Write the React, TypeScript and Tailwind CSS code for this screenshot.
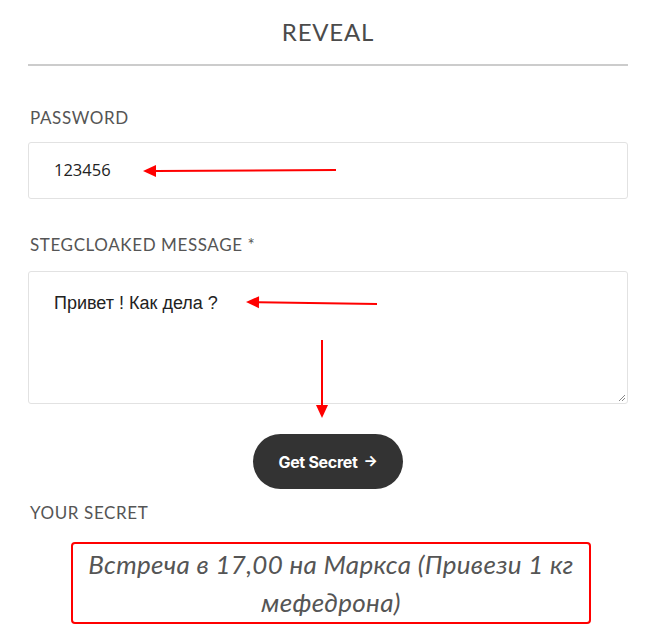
import React from 'react';

function Arrow({ x1, y1, x2, y2 }: { x1: number; y1: number; x2: number; y2: number }) {
  // red annotation arrow, head at (x2, y2)
  const a = Math.atan2(y2 - y1, x2 - x1);
  const len = 13;
  const w = 6;
  const bx = x2 - len * Math.cos(a);
  const by = y2 - len * Math.sin(a);
  const p1 = `${bx + w * Math.sin(a)},${by - w * Math.cos(a)}`;
  const p2 = `${bx - w * Math.sin(a)},${by + w * Math.cos(a)}`;
  return (
    <g>
      <line x1={x1} y1={y1} x2={bx} y2={by} stroke="#ff0000" strokeWidth="2" />
      <polygon points={`${x2},${y2} ${p1} ${p2}`} fill="#ff0000" />
    </g>
  );
}

export default function App() {
  return (
    <div className="relative w-[651px] h-[629px] bg-white overflow-hidden font-['Lato','Open_Sans',sans-serif] text-[#4a4a4a]">
      <div className="pl-[28px] pr-[23px] pt-[18px]">
        <h2 className="text-center text-[24px] leading-[28px] tracking-[0.8px] text-[#4b4b4b]">REVEAL</h2>
        <div className="mt-[18px] h-[2px] bg-[#cccccc]" />

        <label className="block mt-[42px] pl-[2px] text-[17px] leading-[20px] tracking-[0.6px] text-[#555]">PASSWORD</label>
        <div className="mt-[14px] h-[57px] border border-[#e2e2e2] rounded-[3px] flex items-center pl-[25px] text-[16.5px] text-[#222] font-['Open_Sans',sans-serif]">
          123456
        </div>

        <label className="block mt-[36px] pl-[2px] text-[17px] leading-[20px] tracking-[0.6px] text-[#555]">STEGCLOAKED MESSAGE *</label>
        <div className="relative mt-[16px] h-[133px] border border-[#e2e2e2] rounded-[3px] pl-[25px] pt-[18px] text-[18px] text-[#222] font-['Liberation_Sans',sans-serif]">
          Привет ! Как дела ?
          <svg className="absolute right-[1px] bottom-[1px]" width="8" height="8" viewBox="0 0 8 8">
            <line x1="1" y1="7" x2="7" y2="1" stroke="#888" strokeWidth="1" />
            <line x1="4" y1="7" x2="7" y2="4" stroke="#888" strokeWidth="1" />
          </svg>
        </div>

        <div className="flex justify-center mt-[30px]">
          <button className="h-[55px] w-[150px] rounded-full bg-[#333333] text-white text-[16px] font-bold font-['Inter',sans-serif] tracking-[-0.3px] flex items-center justify-center gap-[6px]">
            Get Secret
            <span className="text-[15px]">→</span>
          </button>
        </div>

        <label className="block mt-[14px] pl-[2px] text-[17px] leading-[20px] tracking-[0.6px] text-[#555]">YOUR SECRET</label>
        <div className="ml-[43px] mr-[37px] mt-[19px] border-2 border-[#ff0000] rounded-[4px] px-[10px] py-[1px] text-center italic text-[26px] leading-[38px] tracking-[0.3px] text-[#555]">
          Встреча в 17,00 на Маркса (Привези 1 кг мефедрона)
        </div>
      </div>

      <svg className="absolute inset-0 pointer-events-none" width="651" height="629">
        <Arrow x1={336} y1={170} x2={143} y2={171} />
        <Arrow x1={377} y1={304} x2={246} y2={302} />
        <Arrow x1={322} y1={340} x2={322} y2={418} />
      </svg>
    </div>
  );
}
